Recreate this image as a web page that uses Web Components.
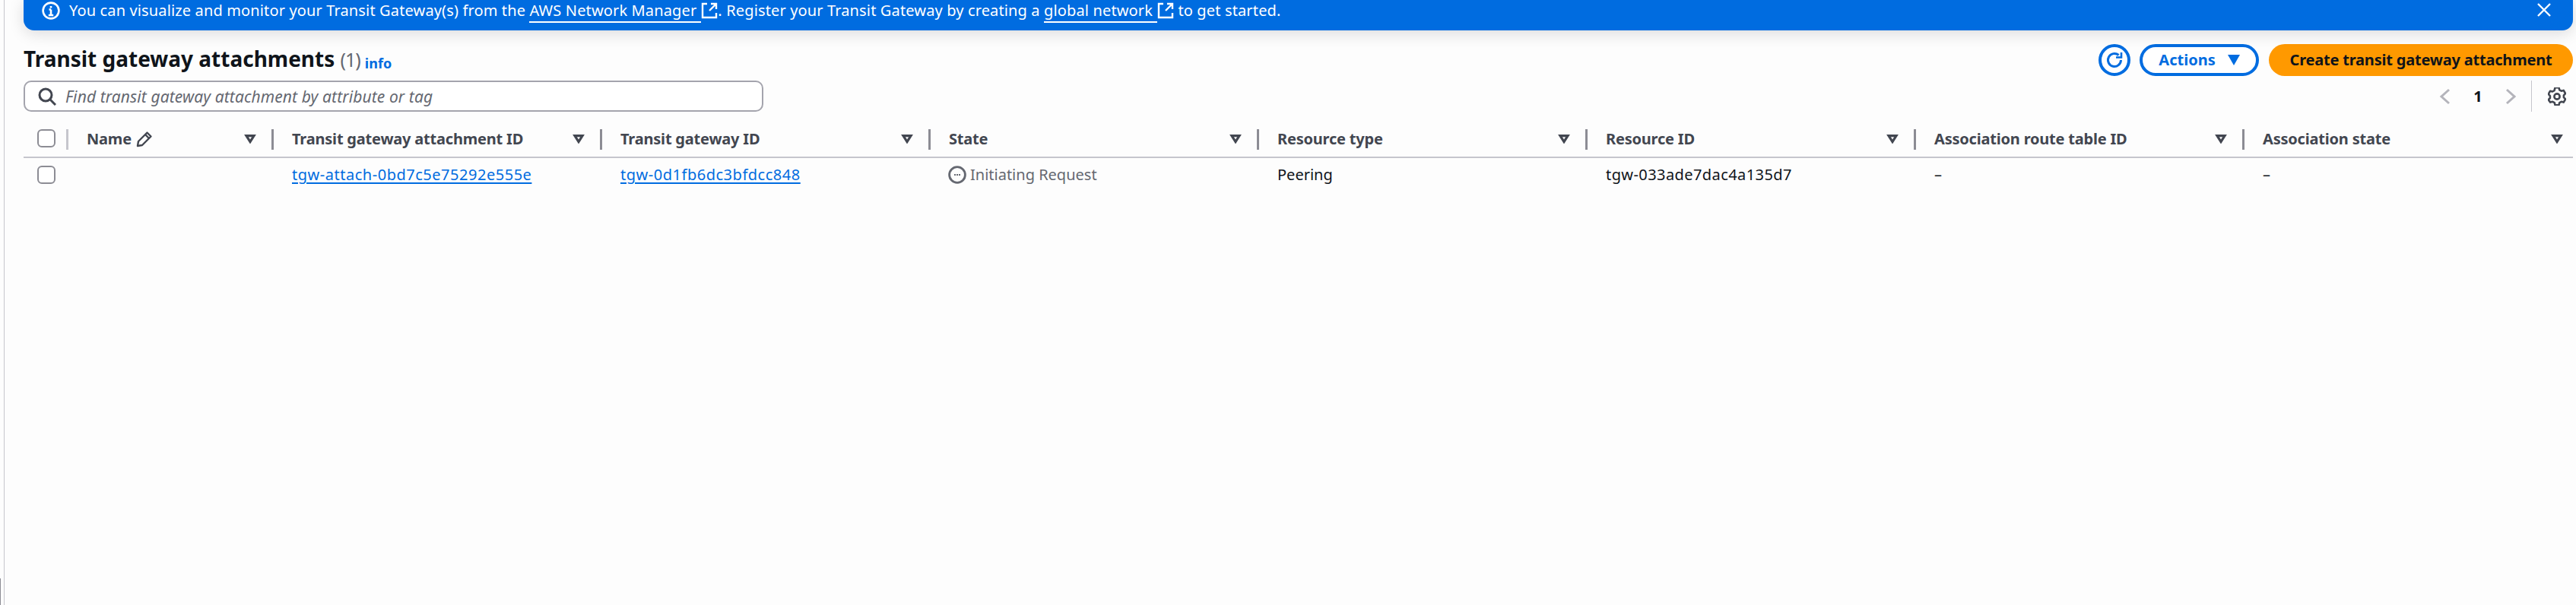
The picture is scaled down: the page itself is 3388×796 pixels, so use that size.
<!DOCTYPE html>
<html lang="en"><head><meta charset="utf-8"><title>Transit gateway attachments</title>
<style>
html,body{margin:0;height:100%;background:#fdfdfd;overflow:hidden}
body{font:20px/28px "Noto Sans",sans-serif;color:#0f141a}
</style></head><body>
<tgw-page>
  <tgw-banner slot="banner">You can visualize and monitor your Transit Gateway(s) from the <tgw-ext>AWS Network Manager</tgw-ext>. Register your Transit Gateway by creating a <tgw-ext>global network</tgw-ext> to get started.</tgw-banner>
  <tgw-toolbar slot="toolbar" count="(1)">Transit gateway attachments</tgw-toolbar>
  <tgw-filter slot="filter">Find transit gateway attachment by attribute or tag</tgw-filter>
  <tgw-table slot="table">
    <tgw-row head>
      <tgw-cell check><tgw-check></tgw-check></tgw-cell>
      <tgw-th first pencil>Name</tgw-th>
      <tgw-th>Transit gateway attachment ID</tgw-th>
      <tgw-th>Transit gateway ID</tgw-th>
      <tgw-th>State</tgw-th>
      <tgw-th>Resource type</tgw-th>
      <tgw-th>Resource ID</tgw-th>
      <tgw-th>Association route table ID</tgw-th>
      <tgw-th last>Association state</tgw-th>
    </tgw-row>
    <tgw-row>
      <tgw-cell check><tgw-check></tgw-check></tgw-cell>
      <tgw-cell></tgw-cell>
      <tgw-cell><tgw-link>tgw-attach-0bd7c5e75292e555e</tgw-link></tgw-cell>
      <tgw-cell><tgw-link>tgw-0d1fb6dc3bfdcc848</tgw-link></tgw-cell>
      <tgw-cell><tgw-status>Initiating Request</tgw-status></tgw-cell>
      <tgw-cell>Peering</tgw-cell>
      <tgw-cell class="id">tgw-033ade7dac4a135d7</tgw-cell>
      <tgw-cell>–</tgw-cell>
      <tgw-cell>–</tgw-cell>
    </tgw-row>
  </tgw-table>
</tgw-page>
<script>
const def=(name,css,html)=>customElements.define(name,class extends HTMLElement{
  constructor(){super();const r=this.attachShadow({mode:'open'});
    r.innerHTML=`<style>${css}</style>${typeof html==='function'?html(this):html}`;}
});
def('tgw-page',`
 :host{display:block;position:relative;height:796px;box-sizing:border-box;margin-left:5px;border-left:1px solid #c6c6cd;padding-left:25px;padding-right:4px}
 .bar{position:absolute;left:-6px;top:761px;width:1px;height:35px;background:#8c8c94}
 .tools{margin-top:18px}
 .filter{margin-top:6px}
 .table{margin-top:23px}
`,`<slot name="banner"></slot><div class="tools"><slot name="toolbar"></slot></div><div class="filter"><slot name="filter"></slot></div><div class="table"><slot name="table"></slot></div><div class="bar"></div>`);
def('tgw-banner',`
 :host{display:flex;align-items:flex-start;height:40px;box-sizing:border-box;background:#006ce0;color:#fff;border-radius:0 0 14px 14px;box-shadow:0 4px 20px rgba(0,7,22,.14);padding:0 28px 0 24px;font-size:20px;line-height:28px;letter-spacing:.14px;position:relative}
 .i{flex:none;width:24px;height:24px;margin:2px 12px 0 0}
 .t{flex:1;white-space:nowrap}
 .x{flex:none;width:20px;height:20px;margin-top:3px}
`,`<svg class="i" viewBox="0 0 24 24" fill="none" stroke="#fff" stroke-width="2.6"><circle cx="12" cy="12" r="10.4"/><path d="M12 10.5V18M8.8 18h6.4M9.5 10.5H12M12 6v2.4"/></svg><div class="t"><slot></slot></div><svg class="x" viewBox="0 0 20 20" fill="none" stroke="#fff" stroke-width="2.4"><path d="M2 2l16 16M18 2L2 18"/></svg>`);
def('tgw-ext',`
 :host{display:inline}
 u{text-decoration:none;border-bottom:2px solid #fff;padding-bottom:1px;padding-right:6px}
 svg{width:22px;height:22px;vertical-align:-4px}
`,`<u><slot></slot></u><svg viewBox="0 0 22 22" fill="none" stroke="#fff" stroke-width="2.4"><path d="M8 2H2v18h18v-6M13 2h7v7M20 2l-9 9"/></svg>`);
def('tgw-toolbar',`
 :host{display:flex;align-items:center;height:42px}
 h1{margin:0;font-size:28px;line-height:42px;font-weight:700;color:#0f141a;white-space:nowrap;flex:1}
 .c{font-weight:400;font-size:25px;color:#656871;letter-spacing:-1px}
 .info{font-size:18px;font-weight:700;color:#006ce0;margin-left:6px;position:relative;top:2px}
 .r{flex:none;width:42px;height:42px;box-sizing:border-box;border:4px solid #006ce0;border-radius:50%;background:#fff;display:flex;align-items:center;justify-content:center;margin-right:12px}
 .r svg{width:24px;height:24px}
 .b{flex:none;box-sizing:border-box;height:42px;border-radius:21px;font-weight:700;font-size:20px;display:flex;align-items:center;white-space:nowrap}
 .a{width:157px;border:4px solid #006ce0;background:#fff;color:#006ce0;justify-content:center;margin-right:13px;gap:16px}
 .a svg{width:16px;height:14px}
 .k{width:400px;background:#f90;color:#0f141a;justify-content:center;letter-spacing:-.2px}
`,t=>`<h1><slot></slot> <span class="c">${t.getAttribute('count')}</span><span class="info">info</span></h1>
 <div class="r"><svg viewBox="0 0 24 24" fill="none" stroke="#006ce0" stroke-width="3"><path d="M20.5 12a8.5 8.5 0 1 1-3-6.5"/><path d="M21 2v6.5h-7" stroke-width="2.6"/></svg></div>
 <div class="b a">Actions<svg viewBox="0 0 16 14"><path d="M0 0h16L8 14z" fill="#006ce0"/></svg></div>
 <div class="b k">Create transit gateway attachment</div>`);
def('tgw-filter',`
 :host{display:flex;align-items:center;height:41px}
 .box{width:973px;height:41px;box-sizing:border-box;border:2px solid #a4a4ad;border-radius:10px;background:#fff;display:flex;align-items:center;padding-left:17px;color:#656871;font-style:italic;font-size:21px;letter-spacing:.1px}
 .box svg{width:24px;height:24px;margin-right:12px;flex:none}
 .p{margin-left:auto;display:flex;align-items:center;height:41px}
 .ch{width:16px;height:24px}
 .n{width:16px;text-align:center;font-weight:700;color:#0f141a;margin:0 27px 0 27px;font-size:20px}
 .d{width:1px;height:41px;background:#c6c6cd;margin:0 21px 0 19px}
 .g{width:24px;height:24px;margin-right:9px}
`,`<div class="box"><svg viewBox="0 0 24 24" fill="none" stroke="#424650" stroke-width="3"><circle cx="10" cy="10" r="8"/><path d="M16 16l7 7"/></svg><slot></slot></div>
 <div class="p"><svg class="ch" viewBox="0 0 16 24" fill="none" stroke="#b4b4bb" stroke-width="3"><path d="M13 3L3 12l10 9"/></svg><span class="n">1</span><svg class="ch" viewBox="0 0 16 24" fill="none" stroke="#b4b4bb" stroke-width="3"><path d="M3 3l10 9-10 9"/></svg><span class="d"></span>
 <svg class="g" viewBox="0 0 24 24" fill="none" stroke="#424650" stroke-width="2.6" stroke-linejoin="round"><path d="M9.5 1.5h5l.8 3 2.4 1.4 3-.8 2.4 4.2-2.2 2.2v2.9l2.2 2.2-2.4 4.2-3-.8-2.4 1.4-.8 3h-5l-.8-3-2.4-1.4-3 .8L.7 17.4l2.2-2.2v-2.9L.7 10.1l2.4-4.2 3 .8 2.4-1.4z" transform="translate(0 -1.2)"/><circle cx="12" cy="12" r="3.6"/></svg></div>`);
def('tgw-table',`:host{display:block}`,`<slot></slot>`);
def('tgw-row',`
 :host{display:grid;grid-template-columns:56px 270px repeat(6,432px) 1fr;align-items:center;height:44px}
 :host([head]){height:38px;box-sizing:border-box;align-items:start;border-bottom:2px solid #c6c6cd}
`,`<slot></slot>`);
def('tgw-cell',`
 :host{display:flex;align-items:center;padding-left:27px;min-width:0;white-space:nowrap;font-size:20px;color:#0f141a}
 :host(.id){letter-spacing:.42px}
 :host([check]){padding-left:18px}
`,`<slot></slot>`);
def('tgw-check',`
 :host{display:block;width:24px;height:24px;box-sizing:border-box;border:2px solid #8c8c94;border-radius:6px;background:#fff}
`,``);
def('tgw-th',`
 :host{display:flex;align-items:center;height:27px;box-sizing:border-box;border-left:3px solid #8c8c94;padding-left:24px;padding-right:20px;padding-bottom:2px;font-size:20px;font-weight:700;color:#424650;white-space:nowrap;min-width:0;letter-spacing:-.2px}
 :host([first]){border-left-color:#c6c6cd}
 :host([last]){padding-right:13px}
 .t{flex:1;display:flex;align-items:center;gap:6px}
 .p{display:none;width:22px;height:22px}
 :host([pencil]) .p{display:block}
 .f{flex:none;width:16px;height:12px}
`,`<span class="t"><slot></slot><svg class="p" viewBox="0 0 22 22" fill="none" stroke="#424650" stroke-width="2.4" stroke-linejoin="round"><path d="M2 20l1-6L14.5 2.5l5 5L8 19z"/><path d="M12 5l5 5"/></svg></span>
 <svg class="f" viewBox="0 0 16 12" fill="none" stroke="#424650" stroke-width="3.2" stroke-linejoin="miter"><path d="M3 1.6h10L8 9.5z"/></svg>`);
def('tgw-link',`:host{display:inline;color:#006ce0;letter-spacing:.52px;text-decoration:underline;text-underline-offset:3px;text-decoration-thickness:2px}`,`<slot></slot>`);
def('tgw-status',`
 :host{display:inline-flex;align-items:center;color:#656871;gap:5px;margin-left:-1px}
 svg{width:24px;height:24px;flex:none}
`,`<svg viewBox="0 0 24 24" fill="none" stroke="#656871" stroke-width="2.8"><circle cx="12" cy="12" r="10.4"/><path d="M8 12h8" stroke-width="2" stroke-dasharray="2 1"/></svg><slot></slot>`);
</script>
</body></html>
